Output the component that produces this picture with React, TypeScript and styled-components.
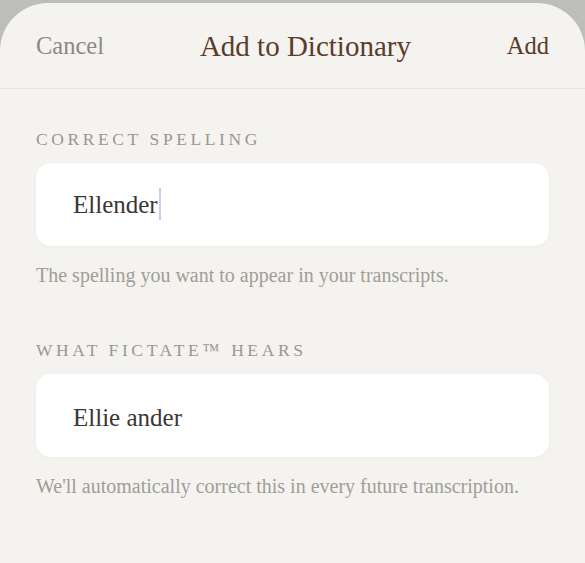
import React from "react";
import styled, { createGlobalStyle } from "styled-components";

const Global = createGlobalStyle`
  html, body { margin: 0; padding: 0; background: #bdbdbc; }
  body { font-family: "Liberation Serif", "DejaVu Serif", serif; }
  * { box-sizing: border-box; }
`;

const Page = styled.div`
  width: 585px;
  height: 563px;
  padding-top: 3px;
  background: #bdbdbc;
  overflow: hidden;
`;

const Sheet = styled.div`
  height: 560px;
  background: #f4f3ef;
  border-radius: 48px 48px 0 0;
  display: flex;
  flex-direction: column;
`;

const Header = styled.div`
  height: 86px;
  display: flex;
  justify-content: space-between;
  align-items: center;
  padding: 0 36px;
  border-bottom: 1.5px solid #e6e4df;
`;

const NavButton = styled.button<{ $primary?: boolean }>`
  border: none;
  background: none;
  padding: 0;
  font-family: inherit;
  font-size: 24.5px;
  color: ${(p) => (p.$primary ? "#5b3b2b" : "#8c8883")};
  margin-top: 1px;
`;

const Title = styled.h1`
  margin: 0;
  font-weight: normal;
  font-size: 29px;
  color: #5b3b2b;
  margin-top: 2px;
`;

const Body = styled.div`
  padding: 39px 36px 0 36px;
  display: flex;
  flex-direction: column;
`;

const Section = styled.div`
  display: flex;
  flex-direction: column;
  margin-bottom: 52px;
`;

const Label = styled.div`
  font-size: 17.5px;
  letter-spacing: 3.6px;
  color: #9b9792;
  text-transform: uppercase;
  line-height: 22px;
  margin-bottom: 13px;
`;

const Field = styled.div`
  height: 83px;
  background: #ffffff;
  border-radius: 15px;
  box-shadow: 0 1px 4px rgba(0, 0, 0, 0.04);
  display: flex;
  align-items: center;
  padding: 5px 37px 0 37px;
  font-size: 25px;
  color: #3a3734;
`;

const Caret = styled.span`
  display: inline-block;
  width: 2px;
  height: 32px;
  background: #c9cdf2;
  margin-left: 1px;
  vertical-align: middle;
  position: relative;
  top: -3px;
`;

const Help = styled.div`
  margin-top: 17px;
  font-size: 20px;
  color: #a19d97;
  line-height: 24px;
`;

export default function App() {
  return (
    <>
      <Global />
      <Page>
        <Sheet>
          <Header>
            <NavButton>Cancel</NavButton>
            <Title>Add to Dictionary</Title>
            <NavButton $primary>Add</NavButton>
          </Header>
          <Body>
            <Section>
              <Label>Correct Spelling</Label>
              <Field>
                <span>Ellender<Caret /></span>
              </Field>
              <Help>The spelling you want to appear in your transcripts.</Help>
            </Section>
            <Section>
              <Label>What Fictate™ Hears</Label>
              <Field>Ellie ander</Field>
              <Help>We'll automatically correct this in every future transcription.</Help>
            </Section>
          </Body>
        </Sheet>
      </Page>
    </>
  );
}
